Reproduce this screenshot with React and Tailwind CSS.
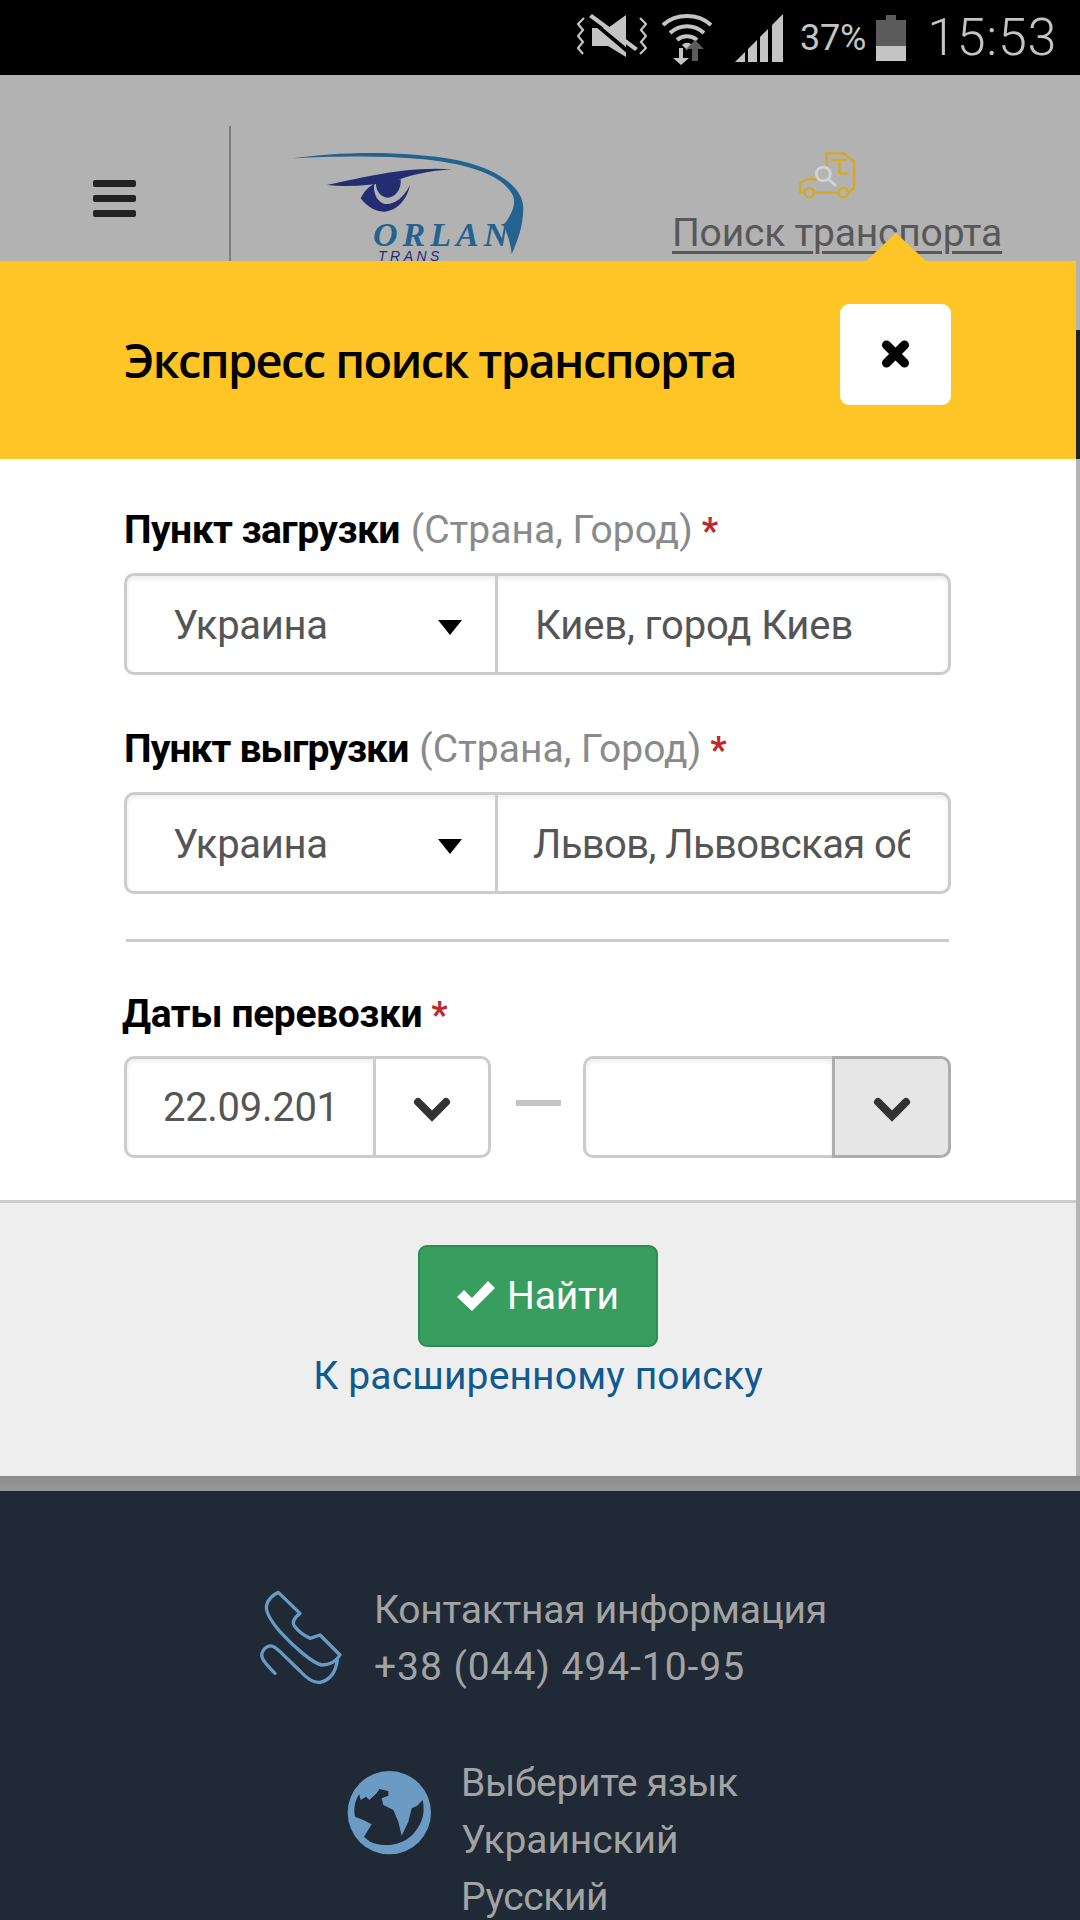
import React from "react";

const body = { fontFamily: '"Roboto","Noto Sans",sans-serif' };

function StatusIcons() {
  return (
    <div className="flex items-center">
      <svg width="70" height="48" viewBox="0 0 70 48" className="mr-[15px]">
        <path d="M15 14h16L49 1v42L31 32H15z" fill="#c4c4c4" />
        <path d="M12 2l3-2 46 38-3 3z" fill="#000" transform="translate(0 5)" />
        <path d="M12 3l3-3 46 34-3 3z" fill="#c4c4c4" />
        <path d="M7 4L1 10l5 6-5 6 5 6-5 6 5 6" fill="none" stroke="#c4c4c4" strokeWidth="2.2" />
        <path d="M63 4l6 6-5 6 5 6-5 6 5 6-6 6" fill="none" stroke="#c4c4c4" strokeWidth="2.2" />
      </svg>
      <svg width="50" height="54" viewBox="0 0 50 54" className="mr-[23px]">
        <path d="M1 14C14 2 36 2 49 14" fill="none" stroke="#c4c4c4" strokeWidth="4" />
        <path d="M8 22c10-9 24-9 34 0" fill="none" stroke="#c4c4c4" strokeWidth="4" />
        <path d="M15 29c6-5 14-5 20 0" fill="none" stroke="#c4c4c4" strokeWidth="4" />
        <path d="M20 34c3-3 7-3 10 0l-5 5z" fill="#c4c4c4" />
        <path d="M17 37h4v10h6l-8 7-8-7h6z" fill="#c4c4c4" />
        <path d="M30 50V38h-6l9-9 9 9h-6v12z" fill="#5b5b5b" />
      </svg>
      <svg width="49" height="48" viewBox="0 0 49 48" className="mr-[16px]" fill="#c4c4c4">
        <path d="M0 48l10-10v10z" />
        <path d="M13 35l9-9v22h-9z" />
        <path d="M25 23l8-8v33h-8z" />
        <path d="M37 11l11-11v48H37z" />
      </svg>
      <span className="text-[36px] tracking-[-0.2px] text-[#c4c4c4] mr-[10px]" style={body}>37%</span>
      <svg width="30" height="46" viewBox="0 0 30 46" className="mr-[21px]">
        <rect x="10" y="0" width="10" height="6" fill="#5b5b5b" />
        <rect x="0" y="5" width="30" height="26" fill="#5b5b5b" />
        <rect x="0" y="31" width="30" height="15" fill="#c4c4c4" />
      </svg>
      <span className="text-[52px] font-light text-[#c4c4c4] tracking-[0.7px]" style={body}>15:53</span>
    </div>
  );
}

function Logo() {
  return (
    <div className="relative w-[280px] h-[140px]">
      <svg width="280" height="140" viewBox="0 0 840 420" className="absolute left-0 top-0">
        <path d="M68 85C200 65 400 60 560 90C680 115 760 170 760 235C760 290 740 340 725 372C722 340 712 310 700 285L712 270C730 240 740 215 725 190C690 130 580 100 460 88C320 75 180 80 68 85Z" fill="#24628f" />
        <path d="M170 165C260 148 400 108 545 118C480 122 420 135 370 155C300 165 240 172 170 165Z" fill="#232d70" />
        <path d="M320 158C290 170 280 190 272 205C295 235 320 245 345 245C385 240 412 205 420 165C400 205 372 225 345 222C325 218 310 195 312 165Z" fill="#232d70" />
        <path d="M318 155L392 148C395 175 378 203 352 203C330 200 316 180 318 155Z" fill="#232d70" />
      </svg>
      <span className="absolute left-[103px] top-[88px] text-[34px] leading-none font-bold italic text-[#24628f] tracking-[5px]" style={{ fontFamily: '"Liberation Serif",serif' }}>ORLAN</span>
      <span className="absolute left-[108px] top-[119px] text-[14px] leading-none italic text-[#232d70] tracking-[3.5px]" style={{ fontFamily: '"Liberation Sans",sans-serif' }}>TRANS</span>
    </div>
  );
}

function Truck() {
  return (
    <svg width="100" height="70" viewBox="0 0 300 210" fill="none" stroke="#d6a823" strokeWidth="7">
      <path d="M140 85V40H190L222 65V145L205 158" />
      <path d="M155 60H200M178 60V100H205" />
      <path d="M73 158H60V130L80 118H112" />
      <path d="M103 158H175" />
      <circle cx="88" cy="158" r="14" />
      <circle cx="190" cy="158" r="14" />
      <circle cx="130" cy="102" r="21" fill="#b6b6b6" stroke="#d4d4d4" strokeWidth="8" />
      <path d="M146 118L168 138" stroke="#d4d4d4" strokeWidth="8" />
    </svg>
  );
}

function Label({ bold, hint, mb, track }) {
  return (
    <div className={`flex items-baseline h-[44px] leading-[44px] text-[39px] ${mb}`} style={body}>
      <span className={`font-bold text-black ${track}`}>{bold}</span>
      {hint && <span className="ml-[11px] text-[#8a8a8a]">{hint}</span>}
      <span className="ml-[9px] text-[#c0272d] font-bold text-[36px]">*</span>
    </div>
  );
}

function Caret() {
  return (
    <svg width="24" height="15" viewBox="0 0 24 15" fill="#000" className="mt-[6px]">
      <path d="M0 0h24L12 15z" />
    </svg>
  );
}

function Chevron() {
  return (
    <svg width="38" height="26" viewBox="0 0 38 26" fill="none" stroke="#333" strokeWidth="8" strokeLinecap="round" strokeLinejoin="miter" className="mt-[6px]">
      <path d="M5 5L19 19L33 5" />
    </svg>
  );
}

function LocationRow({ city, pad, track }) {
  return (
    <div className="flex h-[102px] w-[827px] border-[3px] border-[#ccc] rounded-[10px] bg-white overflow-hidden text-[40px] text-[#555] shadow-[inset_0_3px_4px_rgba(0,0,0,0.07)]" style={body}>
      <div className="flex items-center w-[371px] border-r-[3px] border-[#ccc] pl-[46px] pr-[33px] justify-between shrink-0">
        <span className="mt-[4px] tracking-[-0.3px]">Украина</span>
        <Caret />
      </div>
      <div className={`flex items-center overflow-hidden ${pad}`}>
        <span className={`mt-[4px] whitespace-nowrap ${track}`}>{city}</span>
      </div>
    </div>
  );
}

function DateBox({ value, w, active }) {
  return (
    <div className={`flex h-[102px] ${w}`} style={body}>
      <div className="flex items-center w-[249px] pl-[36px] text-[40px] text-[#555] overflow-hidden shrink-0 bg-white border-y-[3px] border-l-[3px] border-[#ccc] rounded-l-[10px] shadow-[inset_0_3px_4px_rgba(0,0,0,0.07)]">
        <span className="mt-[2px] tracking-[-0.3px]">{value}</span>
      </div>
      <div className={`flex-1 flex items-center justify-center border-[3px] rounded-r-[10px] ${active ? "bg-[#e6e6e6] border-[#adadad]" : "bg-white border-[#ccc]"}`}>
        <Chevron />
      </div>
    </div>
  );
}

function PhoneIcon() {
  return (
    <svg width="100" height="105" viewBox="0 0 300 315" fill="none" stroke="#6b9bc3" strokeWidth="10" strokeLinejoin="round" strokeLinecap="round">
      <path d="M85 22L150 85C130 100 125 115 135 125C150 145 170 155 180 160L210 150L270 210C255 235 235 240 215 240C190 235 130 185 90 140C60 105 45 80 50 60C52 45 70 28 85 22Z" />
      <path d="M262 225C258 255 245 285 210 292C190 295 170 280 150 258L90 200C75 185 60 175 45 190C25 210 35 225 75 265" />
    </svg>
  );
}

function GlobeIcon() {
  return (
    <svg width="100" height="95" viewBox="0 0 300 285">
      <circle cx="148" cy="143" r="125" fill="#6b9bc3" />
      <path d="M58 88L62 105L78 95L88 105L110 85L118 72L145 78L145 92L125 100L130 120L160 135L175 170L185 212L205 170L215 130L232 122L248 105C255 140 250 170 225 200C195 240 135 250 90 230L72 215L95 178L70 165L45 155C40 130 45 105 58 88Z" fill="#1f2a36" />
    </svg>
  );
}

export default function App() {
  return (
    <div className="w-[1080px] h-[1920px] overflow-hidden bg-[#1f2a36] flex flex-col" style={body}>
      <div className="h-[75px] bg-black flex items-center justify-end pr-[23px] shrink-0">
        <StatusIcons />
      </div>

      <div className="h-[186px] bg-[#b2b2b2] flex shrink-0 overflow-hidden">
        <div className="w-[231px] h-[135px] mt-[51px] pt-[54px] pl-[93px] border-r-[2px] border-[#7d7d7d] shrink-0">
          <div className="flex flex-col gap-[8px]">
            <div className="w-[43px] h-[7px] rounded-[2px] bg-[#222]" />
            <div className="w-[43px] h-[7px] rounded-[2px] bg-[#222]" />
            <div className="w-[43px] h-[7px] rounded-[2px] bg-[#222]" />
          </div>
        </div>
        <div className="pt-[55px] pl-[39px] w-[441px] shrink-0">
          <Logo />
        </div>
        <div className="flex flex-col items-start pt-[65px] w-[330px] shrink-0">
          <div className="ml-[108px] h-[70px]"><Truck /></div>
          <span className="text-[39px] leading-[46px] text-[#585858] underline decoration-[3px] underline-offset-[5px] whitespace-nowrap tracking-[-0.2px]">Поиск транспорта</span>
        </div>
      </div>

      <div className="flex shrink-0">
        <div className="relative w-[1076px] flex flex-col shrink-0">
          <div className="absolute -top-[28px] left-[866px] w-0 h-0 border-l-[30px] border-r-[30px] border-b-[28px] border-l-transparent border-r-transparent border-b-[#ffc425]" />
          <div className="h-[198px] bg-[#ffc425] flex items-center pl-[124px] pr-[125px] justify-between">
            <span className="text-[47px] font-semibold text-black tracking-[-1.6px] whitespace-nowrap" style={{ fontFamily: '"Open Sans",sans-serif' }}>Экспресс поиск транспорта</span>
            <div className="w-[111px] h-[101px] bg-white rounded-[9px] flex items-center justify-center -mt-[12px]">
              <svg width="29" height="28" viewBox="0 0 28 28" fill="none" stroke="#000" strokeWidth="9" strokeLinecap="round">
                <path d="M5 5L23 23M23 5L5 23" />
              </svg>
            </div>
          </div>

          <div className="bg-white h-[741px] flex flex-col px-[124px] pt-[49px]">
            <Label bold="Пункт загрузки" hint="(Страна, Город)" mb="mb-[21px]" track="tracking-[-0.55px]" />
            <LocationRow city="Киев, город Киев" pad="pl-[37px]" track="tracking-[-0.1px]" />
            <div className="h-[52px] shrink-0" />
            <Label bold="Пункт выгрузки" hint="(Страна, Город)" mb="mb-[21px]" track="tracking-[-0.9px]" />
            <LocationRow city="Львов, Львовская обл" pad="pl-[35px] w-[412px]" track="tracking-[-0.6px]" />
            <div className="mt-[45px] h-[3px] bg-[#ccc] ml-[2px] w-[823px] shrink-0" />
            <div className="h-[50px] shrink-0" />
            <div className="-ml-[2px]">
              <Label bold="Даты перевозки" mb="mb-[20px]" track="tracking-[-0.4px]" />
            </div>
            <div className="flex items-center w-[827px]">
              <DateBox value="22.09.201" w="w-[367px]" />
              <div className="w-[45px] h-[6px] bg-[#c4c4c4] ml-[25px] mr-[22px] -mt-[8px]" />
              <DateBox value="" w="w-[368px]" active />
            </div>
          </div>

          <div className="h-[276px] bg-[#eee] border-t-[3px] border-[#ccc] flex flex-col items-center pt-[42px]">
            <div className="w-[240px] h-[102px] bg-[#379e5f] border-[2px] border-[#2f8a53] rounded-[9px] flex items-center justify-center gap-[12px] text-white text-[39px]">
              <svg width="38" height="30" viewBox="0 0 38 30" fill="#fff">
                <path d="M0 16l7-7 8 8L31 0l7 7-23 23z" />
              </svg>
              <span className="tracking-[-0.2px]">Найти</span>
            </div>
            <span className="mt-[1px] text-[39px] leading-[56px] text-[#0f5a8e] tracking-[0.15px]">К расширенному поиску</span>
          </div>
        </div>
        <div className="flex-1 flex flex-col">
          <div className="h-[69px] bg-[#b2b2b2]" />
          <div className="h-[129px] bg-[#1c2420]" />
          <div className="flex-1 bg-[#b5b5b5]" />
        </div>
      </div>

      <div className="h-[15px] shrink-0 bg-linear-to-b from-[#8a8a8a] to-[#989898]" />

      <div className="flex-1 bg-[#1f2a36] flex flex-col text-[39px] leading-[57px] text-[#a3a3a3]">
        <div className="flex items-start pl-[250px] pt-[91px]">
          <div className="w-[124px] pt-[3px] shrink-0"><PhoneIcon /></div>
          <div className="whitespace-nowrap">
            <div className="tracking-[-0.25px]">Контактная информация</div>
            <div className="tracking-[0.95px]">+38 (044) 494-10-95</div>
          </div>
        </div>
        <div className="flex items-start pl-[340px] mt-[59px]">
          <div className="w-[121px] pt-[10px] shrink-0"><GlobeIcon /></div>
          <div className="whitespace-nowrap">
            <div className="tracking-[-0.35px]">Выберите язык</div>
            <div className="tracking-[-0.1px]">Украинский</div>
            <div className="tracking-[-0.4px]">Русский</div>
          </div>
        </div>
      </div>
    </div>
  );
}
